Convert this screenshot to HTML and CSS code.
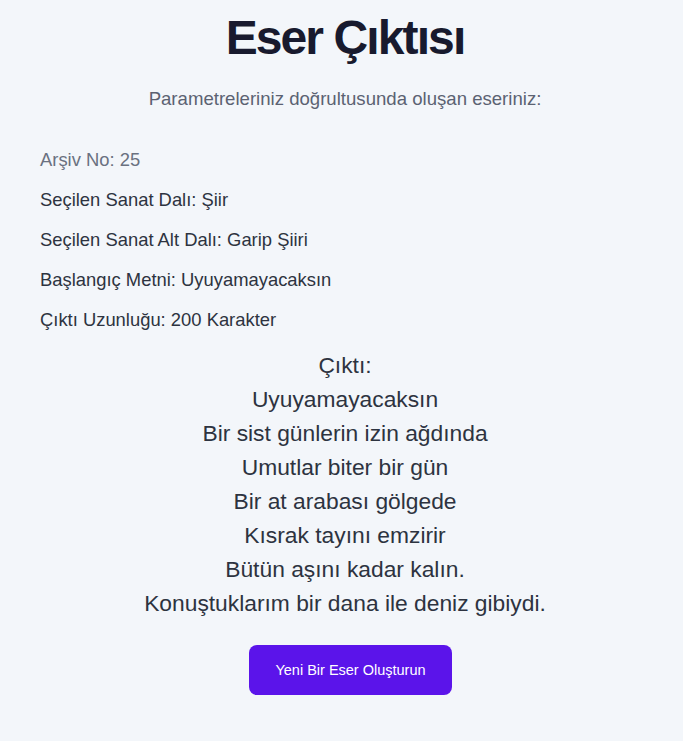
FILE: index.html
```html
<!DOCTYPE html>
<html lang="tr">
<head>
<meta charset="utf-8">
<link rel="stylesheet" href="styles.css">
</head>
<body>
<main class="page">
  <h1 class="title">Eser Çıktısı</h1>
  <p class="subtitle">Parametreleriniz doğrultusunda oluşan eseriniz:</p>
  <section class="info">
    <p class="info-line muted">Arşiv No: 25</p>
    <p class="info-line">Seçilen Sanat Dalı: Şiir</p>
    <p class="info-line">Seçilen Sanat Alt Dalı: Garip Şiiri</p>
    <p class="info-line">Başlangıç Metni: Uyuyamayacaksın</p>
    <p class="info-line">Çıktı Uzunluğu: 200 Karakter</p>
  </section>
  <section class="output">
    <p class="output-line">Çıktı:</p>
    <p class="output-line">Uyuyamayacaksın</p>
    <p class="output-line">Bir sist günlerin izin ağdında</p>
    <p class="output-line">Umutlar biter bir gün</p>
    <p class="output-line">Bir at arabası gölgede</p>
    <p class="output-line">Kısrak tayını emzirir</p>
    <p class="output-line">Bütün aşını kadar kalın.</p>
    <p class="output-line">Konuştuklarım bir dana ile deniz gibiydi.</p>
  </section>
  <div class="actions">
    <button class="btn" type="button">Yeni Bir Eser Oluşturun</button>
  </div>
</main>
</body>
</html>
```
FILE: styles.css
```css
html, body {
  margin: 0;
  padding: 0;
  background: #f3f6fa;
}
body {
  font-family: "Liberation Sans", Arial, sans-serif;
  color: #2d3340;
}
.page {
  padding: 0 33px 40px 40px;
}
.title {
  margin: 0;
  padding-top: 10px;
  text-align: center;
  font-size: 48px;
  line-height: 56px;
  font-weight: 700;
  letter-spacing: -1.9px;
  color: #181a2e;
}
.subtitle {
  margin: 21px 0 0;
  text-align: center;
  font-size: 18.6px;
  line-height: 24px;
  color: #5b6272;
}
.info {
  margin-top: 37px;
  display: flex;
  flex-direction: column;
  gap: 16px;
}
.info-line {
  margin: 0;
  font-size: 18.4px;
  line-height: 24px;
  color: #2d3340;
}
.info-line.muted {
  color: #6a7180;
}
.output {
  margin-top: 16px;
  text-align: center;
}
.output-line {
  margin: 0;
  font-size: 22.8px;
  line-height: 34px;
  color: #2d3340;
}
.actions {
  display: flex;
  justify-content: center;
  margin-top: 25px;
  padding-left: 11px;
}
.btn {
  width: 203px;
  height: 50px;
  border: none;
  border-radius: 8px;
  background: #5b14ea;
  color: #fff;
  font-family: "Liberation Sans", Arial, sans-serif;
  font-size: 14.5px;
}
```
